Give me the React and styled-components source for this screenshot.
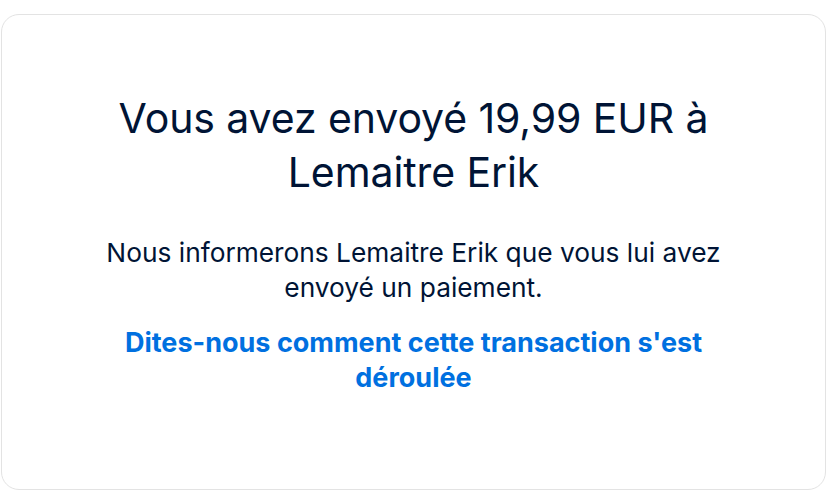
import React from "react";
import styled, { createGlobalStyle } from "styled-components";

const GlobalStyle = createGlobalStyle`
  html, body {
    margin: 0;
    padding: 0;
    background: #ffffff;
  }
  body {
    font-family: Inter, "Noto Sans", "Liberation Sans", sans-serif;
  }
`;

const Page = styled.div`
  padding: 14px 14px 7px 1px;
`;

const Card = styled.div`
  box-sizing: border-box;
  height: 476px;
  border: 1px solid #e3e3e3;
  border-radius: 18px;
  background: #fff;
  display: flex;
  flex-direction: column;
  align-items: center;
  padding: 76px 20px 0;
  text-align: center;
`;

const Content = styled.div`
  max-width: 640px;
  display: flex;
  flex-direction: column;
  align-items: center;
`;

const Title = styled.h1`
  margin: 0;
  font-size: 41px;
  line-height: 54px;
  font-weight: 400;
  color: #001435;
  letter-spacing: -0.1px;
`;

const Message = styled.p`
  margin: 36px 0 0;
  font-size: 26.3px;
  line-height: 35px;
  color: #001435;
`;

const FeedbackLink = styled.a`
  margin-top: 20px;
  font-size: 27px;
  line-height: 35px;
  font-weight: 700;
  color: #0070e0;
  text-decoration: none;
  cursor: pointer;
`;

export default function App() {
  return (
    <>
      <GlobalStyle />
      <Page>
        <Card>
          <Content>
            <Title>Vous avez envoyé 19,99 EUR à Lemaitre Erik</Title>
            <Message>
              Nous informerons Lemaitre Erik que vous lui avez envoyé un
              paiement.
            </Message>
            <FeedbackLink href="#">
              Dites-nous comment cette transaction s'est déroulée
            </FeedbackLink>
          </Content>
        </Card>
      </Page>
    </>
  );
}
